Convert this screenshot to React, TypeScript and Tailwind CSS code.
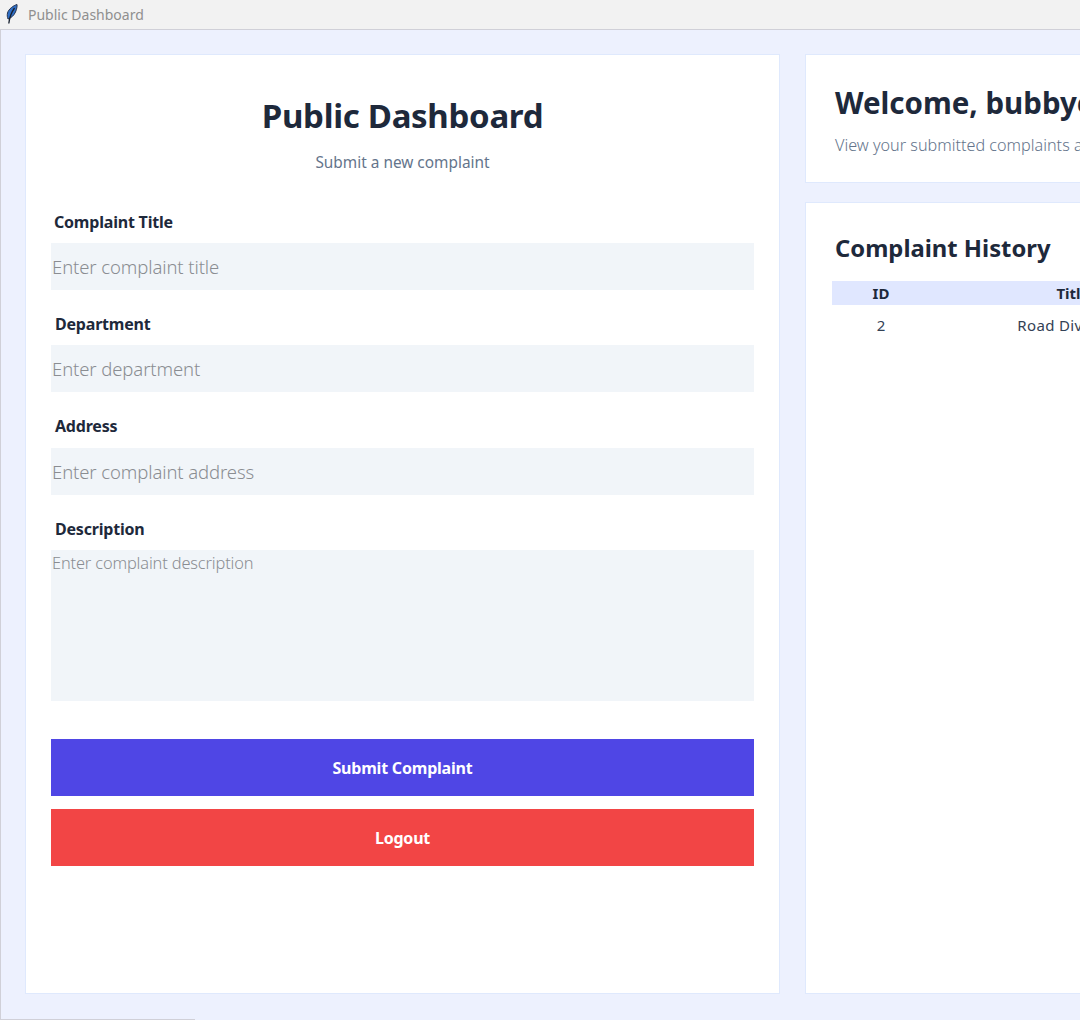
const font = "font-['Noto_Sans',sans-serif]";

function FeatherIcon() {
  return (
    <svg width="16" height="24" viewBox="0 0 16 24" className="shrink-0">
      <path d="M13 1.5C9.5 2.5 4.5 6 3.5 10 3 12.5 3.3 14 4 16 7 15 10 12.5 11.5 9 12.7 6 13.3 3.5 13 1.5Z" fill="#2e6fc8" stroke="#26344f" strokeWidth="1" />
      <path d="M10.5 5C8 8.5 5.5 14 4.8 20.5" fill="none" stroke="#17202f" strokeWidth="1.3" />
    </svg>
  );
}

function Field({ label, placeholder, labelClass }: { label: string; placeholder: string; labelClass: string }) {
  return (
    <div className="flex flex-col">
      <label className={`text-[16px] leading-[22px] font-bold text-[#1e293b] tracking-[-0.2px] ${labelClass}`}>{label}</label>
      <input
        placeholder={placeholder}
        className="h-[47px] w-full bg-[#f1f5f9] px-[1px] text-[18.5px] font-light outline-none placeholder:text-[#8a8d92] tracking-[-0.1px]"
      />
    </div>
  );
}

export default function App() {
  return (
    <div className={`flex h-[1020px] w-[1080px] flex-col overflow-hidden bg-[#edf1fe] ${font}`}>
      <div className="flex h-[30px] shrink-0 items-center gap-[8px] border-b border-[#d0d0d8] bg-[#f2f2f2] pl-[4px]">
        <FeatherIcon />
        <span className="text-[14px] text-[#8f8f8f]">Public Dashboard</span>
      </div>

      <div className="flex min-h-0 flex-1 gap-[25px] border-l border-[#d0d0d8] pt-[24px] pb-[25px] pl-[24px]">
        <section className="flex w-[755px] shrink-0 flex-col border border-[#dfe9fd] bg-white px-[25px] pt-[39px]">
          <h1 className="text-center text-[33px] leading-[44px] font-bold text-[#1e293b] tracking-[-0.3px]">Public Dashboard</h1>
          <p className="mt-[14px] text-center text-[15.4px] leading-[22px] text-[#64748b]">Submit a new complaint</p>

          <form className="mt-[37px] flex flex-col">
            <div className="flex flex-col gap-[23px]">
              <Field label="Complaint Title" placeholder="Enter complaint title" labelClass="h-[32px] pl-[3px]" />
              <Field label="Department" placeholder="Enter department" labelClass="h-[32px] pl-[4px]" />
              <Field label="Address" placeholder="Enter complaint address" labelClass="h-[33px] pl-[4px]" />
              <div className="flex flex-col">
                <label className="h-[32px] pl-[4px] text-[16px] leading-[22px] font-bold text-[#1e293b] tracking-[-0.2px]">Description</label>
                <textarea
                  placeholder="Enter complaint description"
                  className="h-[151px] w-full resize-none bg-[#f1f5f9] px-[1px] pt-[1px] text-[16.4px] leading-[24px] font-light outline-none placeholder:text-[#8a8d92] tracking-[-0.15px]"
                />
              </div>
            </div>
            <button type="button" className="mt-[38px] h-[57px] bg-[#4f46e5] text-[16px] font-bold text-white tracking-[-0.2px]">
              Submit Complaint
            </button>
            <button type="button" className="mt-[13px] h-[57px] bg-[#f24545] text-[16px] font-bold text-white tracking-[-0.2px]">
              Logout
            </button>
          </form>
        </section>

        <div className="flex w-[760px] shrink-0 flex-col gap-[19px]">
          <section className="h-[129px] border border-[#dfe9fd] bg-white pt-[28px] pl-[29px]">
            <h2 className="text-[29.5px] leading-[40px] font-bold whitespace-nowrap text-[#1e293b]">Welcome, bubbye</h2>
            <p className="mt-[11px] text-[16.2px] leading-[22px] font-light whitespace-nowrap text-[#64748b]">View your submitted complaints and track their status</p>
          </section>

          <section className="flex-1 border border-[#dfe9fd] bg-white pt-[27px] pl-[26px]">
            <h2 className="pl-[3px] text-[23.8px] leading-[36px] font-bold text-[#1e293b]">Complaint History</h2>
            <table className="mt-[15px] w-[700px] table-fixed text-[15px] text-[#1e293b]">
              <thead>
                <tr className="h-[24px] bg-[#e0e7ff]">
                  <th className="w-[98px] font-bold">ID</th>
                  <th className="w-[286px] font-bold">Title</th>
                  <th className="font-bold">Status</th>
                </tr>
              </thead>
              <tbody className="text-[#334155]">
                <tr className="h-[40px]">
                  <td className="text-center">2</td>
                  <td className="text-center tracking-[0.35px]">Road Diversion</td>
                  <td className="text-center">Pending</td>
                </tr>
              </tbody>
            </table>
          </section>
        </div>
      </div>

      <div className="h-px w-[195px] shrink-0 bg-[#d0d0d8]" />
    </div>
  );
}
